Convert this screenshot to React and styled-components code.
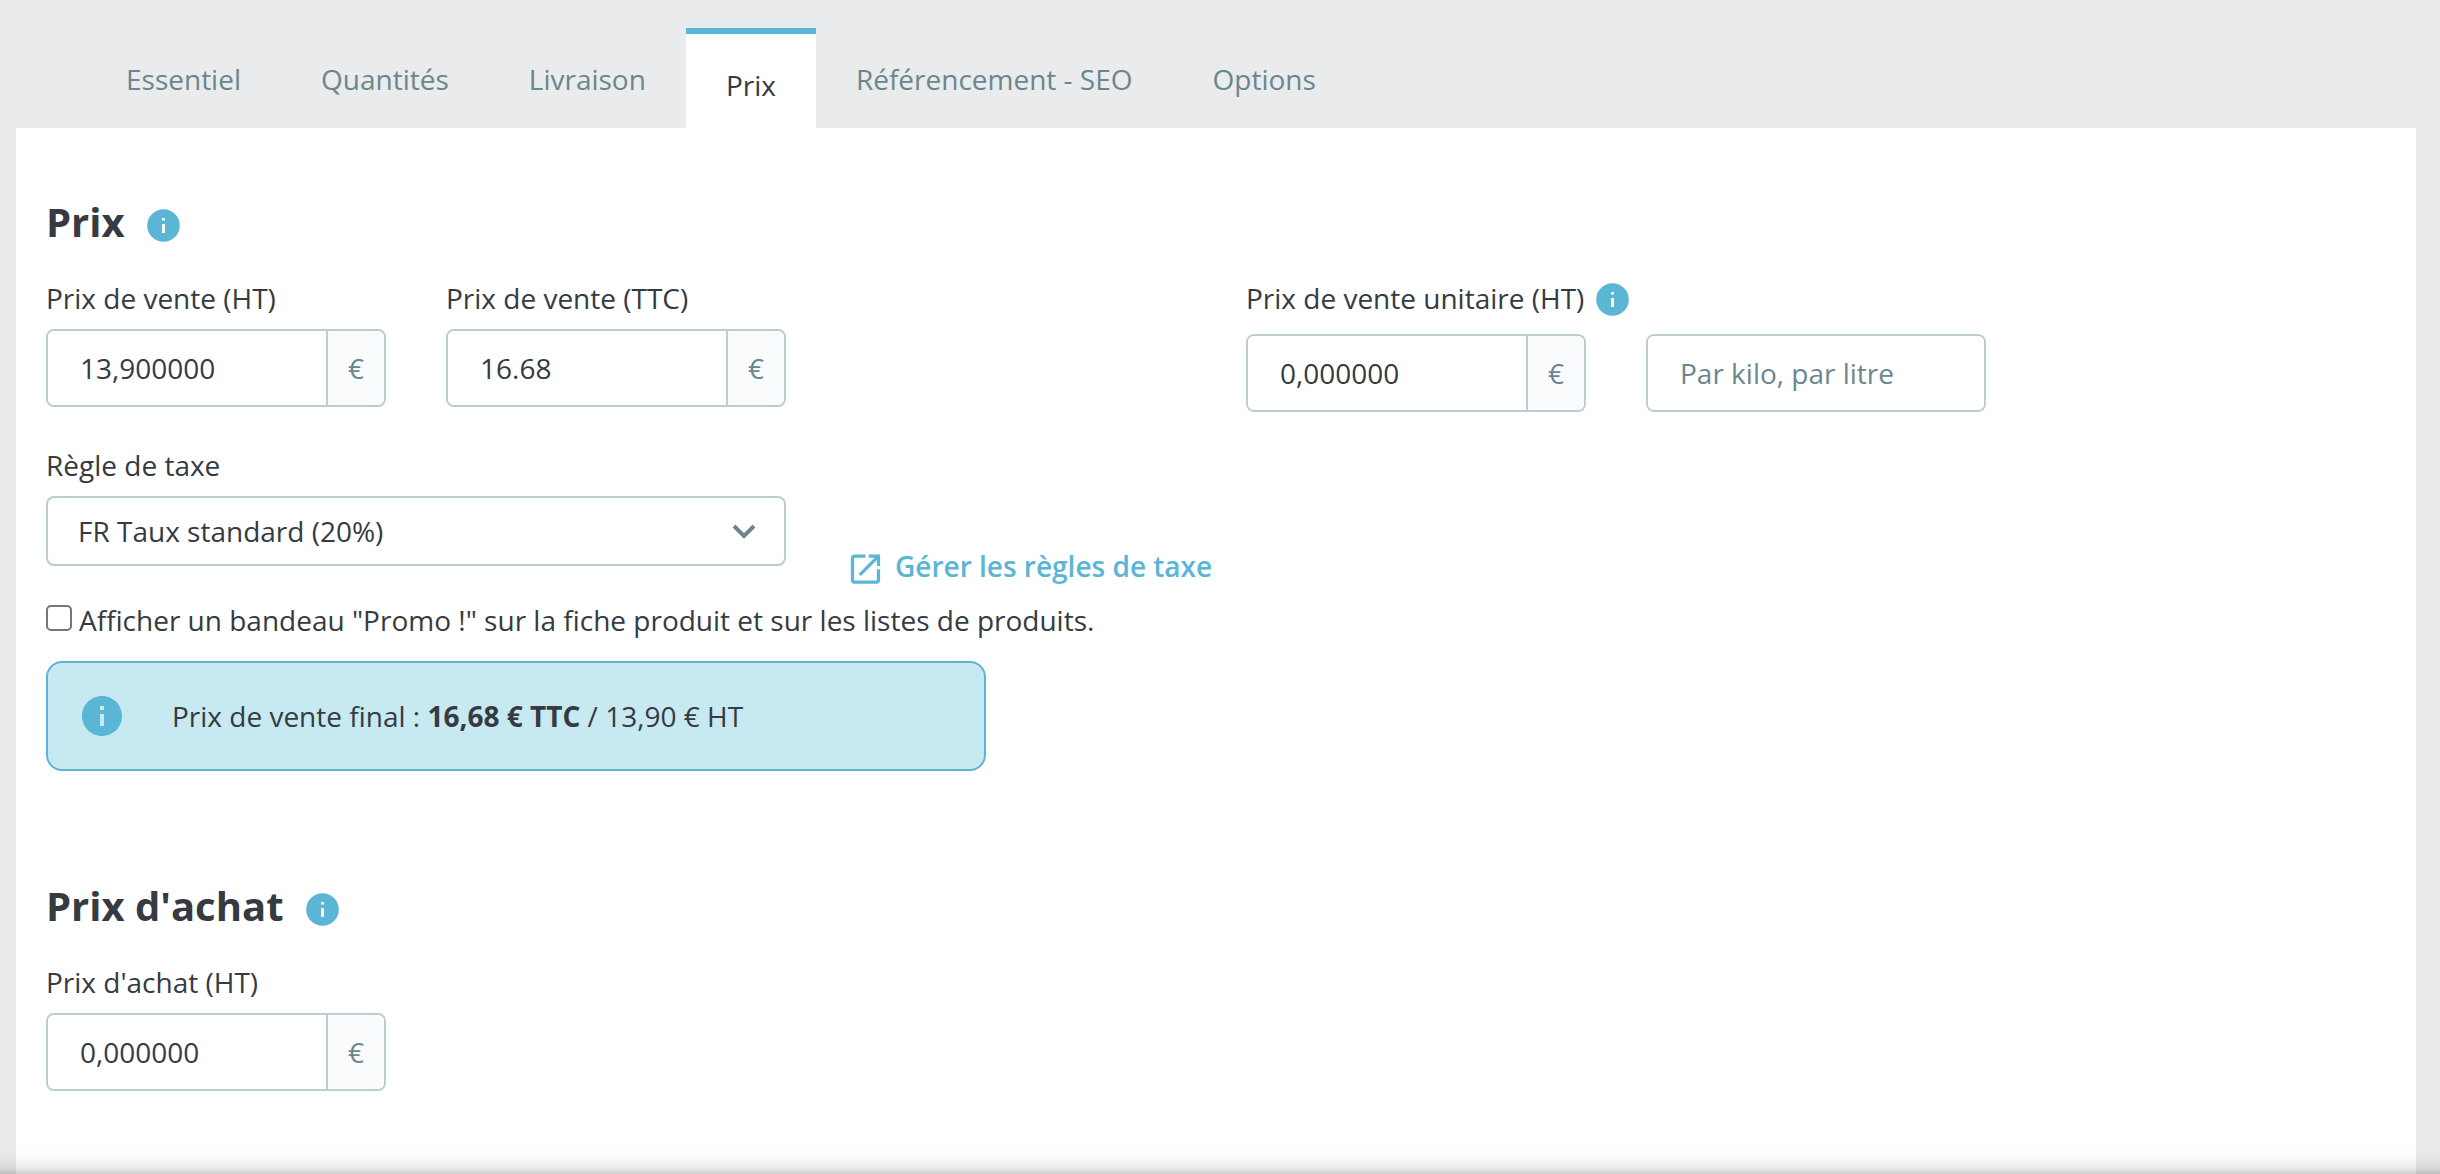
import React, { useState } from "react"
import styled, { createGlobalStyle } from "styled-components"

const GlobalStyle = createGlobalStyle`
  * {
    box-sizing: border-box;
  }

  body {
    margin: 0;
    background: #e9ebec;
    color: #363a41;
    font-family: "Open Sans", sans-serif;
    font-size: 28px;
    line-height: 42px;
  }

  input,
  select,
  button {
    font: inherit;
    color: inherit;
  }

  svg {
    flex-shrink: 0;
  }
`

const Page = styled.div`
  display: flex;
  flex-direction: column;
  min-height: 100vh;
  padding: 28px 24px 0 16px;
`

const Tabs = styled.nav`
  display: flex;
  height: 100px;
  padding-left: 70px;
`

const Tab = styled.button`
  display: flex;
  align-items: flex-start;
  padding: 30px 40px 0;
  border: 0;
  border-top: ${props => (props.$active ? "6px solid #5bb5d5" : "0")};
  background: ${props => (props.$active ? "#fff" : "transparent")};
  color: ${props => (props.$active ? "#363a41" : "#6c868e")};
  cursor: pointer;
`

const Panel = styled.main`
  flex: 1;
  padding: 64px 0 80px;
  background: #fff;
`

const Section = styled.section`
  margin-bottom: ${props => (props.$last ? "0" : "105px")};
`

const Heading = styled.h2`
  display: flex;
  align-items: center;
  gap: 22px;
  margin: 0 0 25px;
  padding: 0 30px;
  font-size: 40px;
  line-height: 60px;
  font-weight: 700;
`

const Row = styled.div`
  display: grid;
  grid-template-columns: repeat(12, 1fr);
  margin-bottom: ${props => props.$space || "0"};
`

const Col = styled.div`
  grid-column: ${props => props.$start || "auto"} / span ${props => props.$span};
  min-width: 0;
  padding: 0 30px;
`

const Label = styled.label`
  display: flex;
  align-items: flex-start;
  gap: 12px;
  height: ${props => (props.$tall ? "47px" : "42px")};
  margin-bottom: 10px;
  white-space: nowrap;
`

const Group = styled.div`
  display: flex;
  height: 78px;
  border: 2px solid #bbcdd2;
  border-radius: 8px;
  overflow: hidden;
`

const Input = styled.input`
  flex: 1;
  min-width: 0;
  padding: 0 32px;
  border: 0;
  background: #fff;
  outline: none;

  &::placeholder {
    color: #6c868e;
    opacity: 1;
  }
`

const Addon = styled.span`
  display: flex;
  align-items: center;
  justify-content: center;
  width: 58px;
  border-left: 2px solid #bbcdd2;
  background: #fafbfc;
  color: #6c868e;
`

const SelectBox = styled.div`
  display: grid;
  align-items: center;
  margin-bottom: 21px;

  > * {
    grid-area: 1 / 1;
  }

  > svg {
    justify-self: end;
    margin-right: 30px;
    pointer-events: none;
  }
`

const Select = styled.select`
  width: 100%;
  height: 70px;
  padding: 0 30px;
  appearance: none;
  border: 2px solid #bbcdd2;
  border-radius: 8px;
  background: #fff;
`

const LinkCol = styled(Col)`
  display: flex;
  align-items: flex-end;
`

const Link = styled.a`
  display: flex;
  align-items: flex-end;
  gap: 10px;
  color: #5bb5d5;
  font-weight: 600;
  text-decoration: none;
  white-space: nowrap;
`

const Check = styled.label`
  display: flex;
  align-items: flex-start;
  gap: 7px;
`

const Checkbox = styled.input`
  appearance: none;
  flex-shrink: 0;
  width: 26px;
  height: 26px;
  margin: 6px 0 0;
  border: 2px solid #767676;
  border-radius: 5px;
  background: #fff;

  &:checked {
    background: #5bb5d5;
  }
`

const Alert = styled.div`
  display: flex;
  align-items: center;
  gap: 50px;
  height: 110px;
  padding: 0 34px;
  border: 2px solid #5bb5d5;
  border-radius: 16px;
  background: #c7e9f2;
`

const Shade = styled.div`
  position: fixed;
  right: 0;
  bottom: 0;
  left: 0;
  height: 30px;
  background: linear-gradient(
    rgba(0, 0, 0, 0),
    rgba(0, 0, 0, 0.02) 50%,
    rgba(0, 0, 0, 0.08) 80%,
    rgba(0, 0, 0, 0.2)
  );
  pointer-events: none;
`

const HelpSvg = styled.svg`
  width: 33px;
  height: 33px;
  margin-top: 6px;
`

const HelpIcon = () => (
  <HelpSvg viewBox="0 0 33 33" aria-hidden="true">
    <circle cx="16.5" cy="16.5" r="16.3" fill="#5bb5d5" />
    <path fill="#fff" d="M15 9h3v2.4h-3zM15 15h3v9h-3z" />
  </HelpSvg>
)

const InfoIcon = () => (
  <svg width={40} height={40} viewBox="2 2 20 20" aria-hidden="true">
    <path
      fill="#5bb5d5"
      d="M12 2C6.48 2 2 6.48 2 12s4.48 10 10 10 10-4.48 10-10S17.52 2 12 2zm1 15h-2v-6h2v6zm0-8h-2V7h2v2z"
    />
  </svg>
)

const Chevron = () => (
  <svg width={24} height={16} viewBox="0 0 24 16" aria-hidden="true">
    <path d="M2 3l10 10L22 3" fill="none" stroke="#6c868e" strokeWidth={4} />
  </svg>
)

const OpenIcon = () => (
  <svg width={39} height={39} viewBox="0 -1 24 24" aria-hidden="true">
    <path
      fill="#5bb5d5"
      d="M19 19H5V5h7V3H5c-1.11 0-2 .9-2 2v14c0 1.1.89 2 2 2h14c1.1 0 2-.9 2-2v-7h-2v7zM14 3v2h3.59l-9.83 9.83 1.41 1.41L19 6.41V10h2V3h-7z"
    />
  </svg>
)

const PriceField = props => (
  <>
    <Label htmlFor={props.id} $tall={props.help}>
      {props.label}
      {props.help && <HelpIcon />}
    </Label>
    <Group>
      <Input id={props.id} type="text" defaultValue={props.value} />
      <Addon>€</Addon>
    </Group>
  </>
)

const tabs = ["Essentiel", "Quantités", "Livraison", "Prix", "Référencement - SEO", "Options"]

const App = () => {
  const [active, setActive] = useState("Prix")

  return (
    <>
      <GlobalStyle />
      <Page>
        <Tabs>
          {tabs.map(tab => (
            <Tab key={tab} type="button" $active={tab === active} onClick={() => setActive(tab)}>
              {tab}
            </Tab>
          ))}
        </Tabs>
        <Panel>
          <Section>
            <Heading>
              Prix
              <HelpIcon />
            </Heading>
            <Row $space="32px">
              <Col $span={2}>
                <PriceField id="price-ht" label="Prix de vente (HT)" value="13,900000" />
              </Col>
              <Col $span={2}>
                <PriceField id="price-ttc" label="Prix de vente (TTC)" value="16.68" />
              </Col>
              <Col $start={7} $span={2}>
                <PriceField id="unit-price" label="Prix de vente unitaire (HT)" value="0,000000" help />
              </Col>
              <Col $span={2}>
                <Label htmlFor="unit" $tall />
                <Group>
                  <Input id="unit" type="text" placeholder="Par kilo, par litre" aria-label="Unité" />
                </Group>
              </Col>
            </Row>
            <Row $space="12px">
              <Col $span={4}>
                <Label htmlFor="tax-rule">Règle de taxe</Label>
                <SelectBox>
                  <Select id="tax-rule" defaultValue="20">
                    <option value="20">FR Taux standard (20%)</option>
                  </Select>
                  <Chevron />
                </SelectBox>
              </Col>
              <LinkCol $span={3}>
                <Link href="#taxes">
                  <OpenIcon />
                  Gérer les règles de taxe
                </Link>
              </LinkCol>
            </Row>
            <Row $space="20px">
              <Col $span={12}>
                <Check>
                  <Checkbox type="checkbox" />
                  Afficher un bandeau "Promo !" sur la fiche produit et sur les listes de produits.
                </Check>
              </Col>
            </Row>
            <Row>
              <Col $span={5}>
                <Alert>
                  <InfoIcon />
                  <span>
                    Prix de vente final : <strong>16,68 € TTC</strong> / 13,90 € HT
                  </span>
                </Alert>
              </Col>
            </Row>
          </Section>
          <Section $last>
            <Heading>
              Prix d'achat
              <HelpIcon />
            </Heading>
            <Row>
              <Col $span={2}>
                <PriceField id="cost-ht" label="Prix d'achat (HT)" value="0,000000" />
              </Col>
            </Row>
          </Section>
        </Panel>
      </Page>
      <Shade />
    </>
  )
}

export default App
